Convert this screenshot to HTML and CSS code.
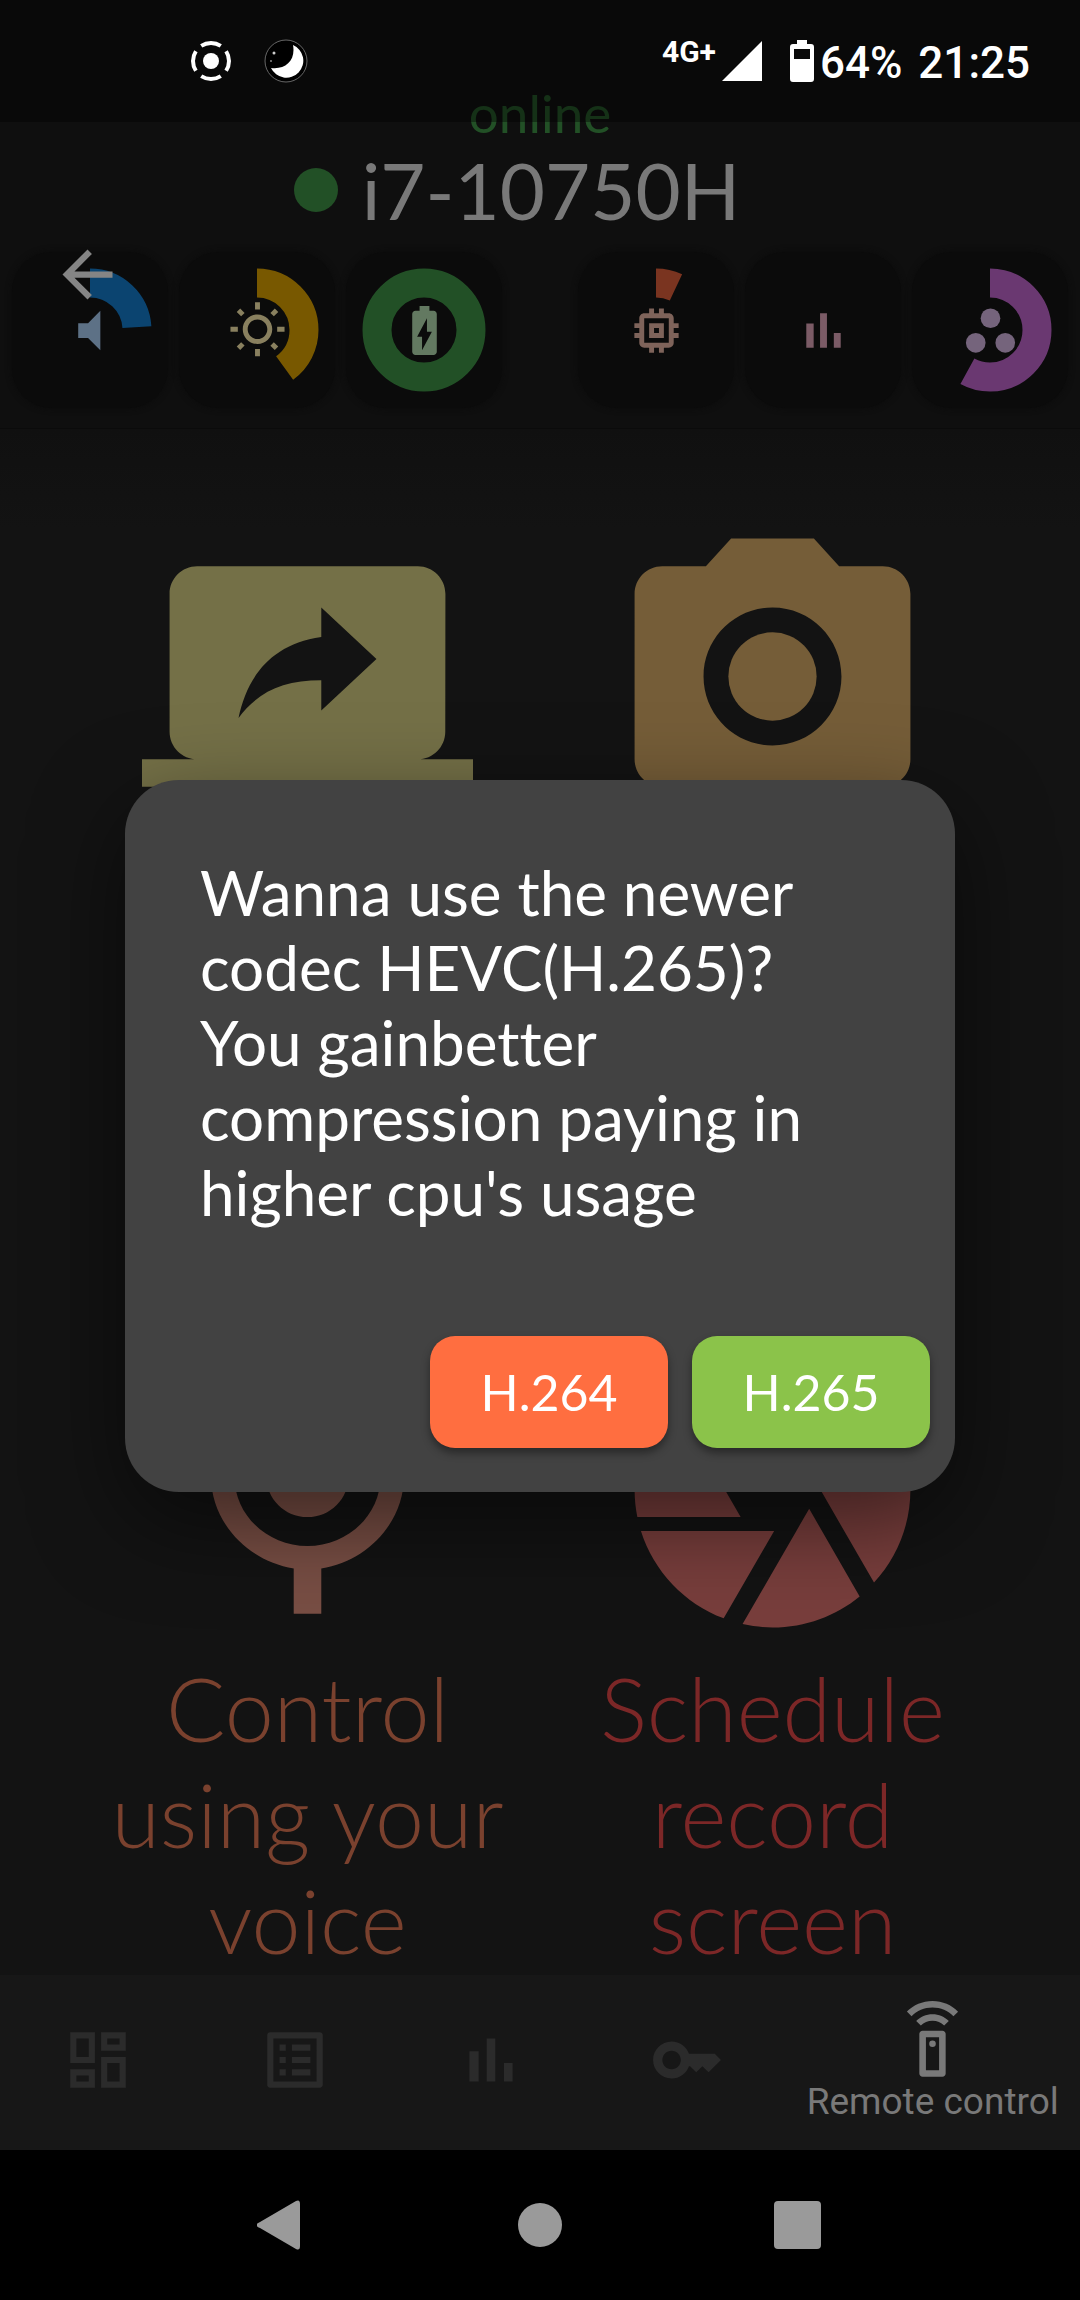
FILE: index.html
```html
<!DOCTYPE html>
<html lang="en">
<head>
<meta charset="utf-8">
<meta name="viewport" content="width=device-width, initial-scale=1">
<title>Remote control</title>
<link rel="stylesheet" href="styles.css">
</head>
<body>
<div class="app">
  <header class="header">
    <p class="state">online</p>
    <h1 class="device"><span class="device-dot"></span>i7-10750H</h1>
    <div class="gauges">
      <div class="gauge-group">
        <div class="gauge volume">
          <svg class="ring" viewBox="0 0 124 124"><circle cx="62" cy="62" r="47" pathLength="100" stroke-dasharray="24 100"/></svg>
          <svg class="glyph" viewBox="0 0 24 24"><path d="M7 9v6h4l5 5V4l-5 5H7z"/></svg>
        </div>
        <div class="gauge brightness">
          <svg class="ring" viewBox="0 0 124 124"><circle cx="62" cy="62" r="47" pathLength="100" stroke-dasharray="40 100"/></svg>
          <svg class="glyph" viewBox="0 0 24 24"><path d="M6.76 4.84l-1.8-1.79-1.41 1.41 1.79 1.79 1.42-1.41zM4 10.5H1v2h3v-2zm9-9.95h-2V3.5h2V.55zm7.45 3.91l-1.41-1.41-1.79 1.79 1.41 1.41 1.79-1.79zm-3.21 13.7l1.79 1.8 1.41-1.41-1.8-1.79-1.4 1.4zM20 10.5v2h3v-2h-3zm-8-5c-3.31 0-6 2.69-6 6s2.69 6 6 6 6-2.69 6-6-2.69-6-6-6zm0 10c-2.21 0-4-1.79-4-4s1.79-4 4-4 4 1.79 4 4-1.79 4-4 4zm-1 6.95h2V19.5h-2v2.95zm-7.45-3.91l1.41 1.41 1.79-1.8-1.41-1.41-1.79 1.8z"/></svg>
        </div>
        <div class="gauge battery">
          <svg class="ring" viewBox="0 0 124 124"><circle cx="62" cy="62" r="47"/></svg>
          <svg class="glyph" viewBox="0 0 24 24"><path d="M15.67 4H14V2h-4v2H8.33C7.6 4 7 4.6 7 5.33v15.33C7 21.4 7.6 22 8.33 22h7.33c.74 0 1.34-.6 1.34-1.33V5.33C17 4.6 16.4 4 15.67 4zM11 20v-5.5H9L13 7v5.5h2L11 20z"/></svg>
        </div>
      </div>
      <div class="gauge-group">
        <div class="gauge cpu">
          <svg class="ring" viewBox="0 0 124 124"><circle cx="62" cy="62" r="47" pathLength="100" stroke-dasharray="7 100"/></svg>
          <svg class="glyph" viewBox="0 0 24 24"><path d="M15 9H9v6h6V9zm-2 4h-2v-2h2v2zm8-2V9h-2V7c0-1.1-.9-2-2-2h-2V3h-2v2h-2V3H9v2H7c-1.1 0-2 .9-2 2v2H3v2h2v2H3v2h2v2c0 1.1.9 2 2 2h2v2h2v-2h2v2h2v-2h2c1.1 0 2-.9 2-2v-2h2v-2h-2v-2h2zm-4 6H7V7h10v10z"/></svg>
        </div>
        <div class="gauge stats">
          <svg class="glyph" viewBox="0 0 24 24"><path d="M5 9.2h3V19H5zM10.6 5h2.8v14h-2.8zm5.6 8H19v6h-2.8z"/></svg>
        </div>
        <div class="gauge memory">
          <svg class="ring" viewBox="0 0 124 124"><circle cx="62" cy="62" r="47" pathLength="100" stroke-dasharray="58 100"/></svg>
          <svg class="glyph" viewBox="0 0 24 24"><circle cx="12" cy="7" r="4"/><circle cx="6" cy="17" r="4"/><circle cx="18" cy="17" r="4"/></svg>
        </div>
      </div>
    </div>
    <button class="back" type="button" aria-label="Back">
      <svg viewBox="0 0 24 24"><path d="M20 11H7.83l5.59-5.59L12 4l-8 8 8 8 1.41-1.41L7.83 13H20v-2z"/></svg>
    </button>
  </header>

  <main class="actions">
    <a class="action share" href="#share" aria-label="Share screen">
      <svg viewBox="0 0 24 24"><path d="M20 18c1.1 0 1.99-.9 1.99-2L22 6c0-1.11-.9-2-2-2H4c-1.11 0-2 .89-2 2v10c0 1.1.89 2 2 2H0v2h24v-2h-4zm-7-3.53v-2.19c-2.78 0-4.61.85-6 2.72.56-2.67 2.11-5.33 6-5.87V7l4 3.73-4 3.74z"/></svg>
    </a>
    <a class="action photo" href="#photo" aria-label="Screenshot">
      <svg viewBox="0 0 24 24"><circle cx="12" cy="12" r="3.2"/><path d="M9 2L7.17 4H4c-1.1 0-2 .9-2 2v12c0 1.1.9 2 2 2h16c1.1 0 2-.9 2-2V6c0-1.1-.9-2-2-2h-3.17L15 2H9zm3 15c-2.76 0-5-2.24-5-5s2.24-5 5-5 5 2.24 5 5-2.24 5-5 5z"/></svg>
    </a>
    <a class="action voice" href="#voice">
      <svg viewBox="0 0 24 24"><path d="M12 14c1.66 0 2.99-1.34 2.99-3L15 5c0-1.66-1.34-3-3-3S9 3.34 9 5v6c0 1.66 1.34 3 3 3zm5.3-3c0 3-2.54 5.1-5.3 5.1S6.7 14 6.7 11H5c0 3.41 2.72 6.23 6 6.72V21h2v-3.28c3.28-.48 6-3.3 6-6.72h-1.7z"/></svg>
      <span>Control using your voice</span>
    </a>
    <a class="action schedule" href="#schedule">
      <svg viewBox="0 0 24 24"><path d="M9.4 10.5l4.77-8.26C13.47 2.09 12.75 2 12 2c-2.4 0-4.6.85-6.32 2.25l3.66 6.35.06-.1zM21.54 9c-.92-2.92-3.15-5.26-6-6.34L11.88 9h9.66zm.26 1h-7.49l.29.5 4.76 8.25C21 16.97 22 14.61 22 12c0-.69-.07-1.35-.2-2zM8.54 12l-3.9-6.75C3.01 7.03 2 9.39 2 12c0 .69.07 1.35.2 2h7.49l-1.15-2zm-6.08 3c.92 2.92 3.15 5.26 6 6.34L12.12 15H2.46zm11.27 0l-3.9 6.76c.7.15 1.42.24 2.17.24 2.4 0 4.6-.85 6.32-2.25l-3.66-6.35-.93 1.6z"/></svg>
      <span>Schedule record screen</span>
    </a>
  </main>

  <nav class="tabs">
    <a class="tab" href="#dashboard" aria-label="Dashboard"><svg viewBox="0 0 24 24"><path d="M19 5v2h-4V5h4M9 5v6H5V5h4m10 8v6h-4v-6h4M9 17v2H5v-2h4M21 3h-8v6h8V3zM11 3H3v10h8V3zm10 8h-8v10h8V11zm-10 4H3v6h8v-6z"/></svg></a>
    <a class="tab" href="#list" aria-label="List"><svg viewBox="0 0 24 24"><path d="M19 5v14H5V5h14m1.1-2H3.9c-.5 0-.9.4-.9.9v16.2c0 .4.4.9.9.9h16.2c.4 0 .9-.5.9-.9V3.9c0-.5-.5-.9-.9-.9zM11 7h6v2h-6V7zm0 4h6v2h-6v-2zm0 4h6v2h-6zM7 7h2v2H7zm0 4h2v2H7zm0 4h2v2H7z"/></svg></a>
    <a class="tab" href="#stats" aria-label="Statistics"><svg viewBox="0 0 24 24"><path d="M5 9.2h3V19H5zM10.6 5h2.8v14h-2.8zm5.6 8H19v6h-2.8z"/></svg></a>
    <a class="tab" href="#key" aria-label="Key"><svg viewBox="0 0 24 24"><path d="M21 10h-8.350C11.830 7.670 9.610 6 7 6c-3.310 0-6 2.690-6 6s2.690 6 6 6c2.610 0 4.830-1.670 5.650-4H13l2 2 2-2 2 2 4-4.040L21 10zM7 15c-1.650 0-3-1.350-3-3s1.350-3 3-3 3 1.350 3 3-1.350 3-3 3z"/></svg></a>
    <a class="tab current" href="#remote" aria-current="page"><svg viewBox="0 0 24 24"><path fill-rule="evenodd" d="M15 9H9c-.55 0-1 .45-1 1v12c0 .55.45 1 1 1h6c.55 0 1-.45 1-1V10c0-.55-.45-1-1-1zm-1 12h-4V11h4v10z"/><circle cx="12" cy="13" r="1"/><path d="M7.05 6.05l1.41 1.41C9.370 6.560 10.620 6 12 6s2.630.56 3.540 1.460l1.410-1.410C15.680 4.780 13.930 4 12 4s-3.680.78-4.950 2.050zM12 0C8.960 0 6.210 1.230 4.220 3.220l1.410 1.410C7.260 3.010 9.510 2 12 2s4.740 1.010 6.360 2.640l1.410-1.410C17.790 1.230 15.040 0 12 0z"/></svg><span>Remote control</span></a>
  </nav>

  <div class="system-nav">
    <button type="button" aria-label="System back"><svg viewBox="3 0 50 50"><path d="M6 22L42 1Q46-1 46 4V46Q46 51 42 49L6 28Q-1 25 6 22z"/></svg></button>
    <button type="button" aria-label="Home"><svg viewBox="0 0 50 50"><circle cx="25" cy="25" r="22"/></svg></button>
    <button type="button" aria-label="Recent apps"><svg viewBox="0 0 50 50"><rect x="1" y="1" width="47" height="48" rx="4"/></svg></button>
  </div>

  <div class="status">
    <div class="status-side">
      <svg class="status-icon" viewBox="0 0 44 44"><circle cx="22" cy="22" r="8" fill="#fff"/><g fill="none" stroke="#fff" stroke-width="4"><circle cx="22" cy="22" r="18" pathLength="360" stroke-dasharray="66 24" stroke-dashoffset="-57"/></g></svg>
      <svg class="status-icon" viewBox="0 0 44 44"><circle cx="22" cy="22" r="21" fill="#000" stroke="#666"/><path fill="#fff" d="M29 6A17 17 0 1 1 7 29C21 31 32 22 29 6z"/><circle cx="10" cy="14" r="1.500" fill="#ccc"/><circle cx="7" cy="22" r="1" fill="#888"/></svg>
    </div>
    <div class="status-side">
      <span class="network">4G+</span>
      <svg class="signal" viewBox="0 0 40 40"><path d="M40 0V40H0z"/></svg>
      <svg class="charge" viewBox="0 0 24 42"><path fill-rule="evenodd" d="M7 0h10v4h4q3 0 3 3v32q0 3-3 3H3q-3 0-3-3V7q0-3 3-3h4zM4 9v10h16V9z"/></svg>
      <span class="percent">64%</span>
      <time>21:25</time>
    </div>
  </div>

  <div class="overlay">
    <section class="dialog" role="dialog" aria-modal="true" aria-labelledby="question">
      <p id="question">Wanna use the newer codec HEVC(H.265)? You gainbetter compression paying in higher cpu's usage</p>
      <div class="choices">
        <button class="choice old" type="button">H.264</button>
        <button class="choice new" type="button">H.265</button>
      </div>
    </section>
  </div>
</div>
</body>
</html>
```
FILE: styles.css
```css
* {
  box-sizing: border-box;
}

body {
  margin: 0;
  background: #121212;
  font-family: Lato, "Noto Sans", sans-serif;
  font-variant-ligatures: none;
}

p, h1 {
  margin: 0;
}

a {
  color: inherit;
  text-decoration: none;
}

button {
  border: 0;
  padding: 0;
  background: none;
  color: inherit;
  font: inherit;
}

svg {
  display: block;
  fill: currentColor;
}

.app {
  position: relative;
  display: flex;
  flex-direction: column;
  min-height: 100vh;
}

/* Header */
.header {
  position: relative;
  padding: 83px 12px 20px;
  background: #0f0f0f;
  border-bottom: 1px solid #0b0b0b;
}

.state {
  color: #225026;
  font-size: 53px;
  line-height: 60px;
  text-align: center;
}

.device {
  display: flex;
  justify-content: center;
  align-items: center;
  gap: 24px;
  padding-right: 46px;
  color: #797979;
  font-size: 78px;
  font-weight: 400;
  line-height: 94px;
}

.device-dot {
  width: 44px;
  height: 44px;
  border-radius: 50%;
  background: #225026;
}

.gauges {
  display: flex;
  justify-content: space-between;
  padding-top: 15px;
}

.gauge-group {
  display: flex;
  gap: 11px;
}

.gauge {
  display: grid;
  place-items: center;
  width: 156px;
  height: 156px;
  border-radius: 40px;
  background: #0b0b0b;
  box-shadow: 0 0 6px #0b0b0b;
}

.gauge > svg {
  grid-area: 1 / 1;
}

.ring {
  width: 124px;
  height: 124px;
  fill: none;
  stroke-width: 29px;
  transform: rotate(-90deg);
}

.glyph {
  width: 59px;
  height: 59px;
}

.volume { color: #5d7186; }
.volume .ring { stroke: #0b4470; }
.brightness { color: #89805f; }
.brightness .ring { stroke: #785800; }
.battery { color: #637961; }
.battery .ring { stroke: #225026; }
.cpu { color: #7e635a; }
.cpu .ring { stroke: #7a3420; }
.stats { color: #7b5b66; }
.memory { color: #75647c; }
.memory .ring { stroke: #6a3871; }

.back {
  position: absolute;
  top: 237px;
  left: 50px;
  width: 75px;
  height: 75px;
  color: #858585;
}

.back svg {
  width: 75px;
  height: 75px;
}

/* Actions */
.actions {
  flex: 1;
  display: grid;
  grid-template-columns: 1fr 1fr;
  align-content: start;
  gap: 482px 0;
  padding: 82px 75px 0;
  background: linear-gradient(#101010, #131313 100px);
}

.action {
  display: flex;
  flex-direction: column;
  align-items: center;
  font-size: 88px;
  font-weight: 300;
  line-height: 106px;
  text-align: center;
}

.action svg {
  width: 331px;
  height: 331px;
}

.share { color: #747047; }
.photo { color: #755d38; }
.voice { color: #784e44; }
.voice span { color: #7a412e; }
.schedule { color: #783e3c; }
.schedule span { color: #7c2727; }

/* Tabs */
.tabs {
  display: flex;
  height: 175px;
  background: #171717;
  color: #2b2b2b;
}

.tab {
  flex: 2 1 0;
  display: flex;
  flex-direction: column;
  align-items: center;
  padding-top: 48px;
}

.tab svg {
  width: 74px;
  height: 74px;
}

.tab.current {
  flex-grow: 3;
  padding-top: 26px;
  color: #797979;
  font-family: Roboto, sans-serif;
  font-size: 37px;
  line-height: 44px;
  white-space: nowrap;
}

.tab.current svg {
  width: 79px;
  height: 79px;
}

/* System bars */
.system-nav {
  display: flex;
  justify-content: center;
  align-items: center;
  gap: 208px;
  height: 150px;
  background: #000;
  color: #9a9a9a;
}

.system-nav svg {
  width: 50px;
  height: 50px;
}

.status {
  position: absolute;
  inset: 0 0 auto;
  display: flex;
  justify-content: space-between;
  height: 122px;
  padding: 39px 50px 0 189px;
  background: rgba(0, 0, 0, 0.38);
  color: #fff;
  font-family: Roboto, sans-serif;
  font-size: 44px;
  font-weight: 500;
  line-height: 48px;
}

.status-side {
  display: flex;
}

.status-icon {
  width: 44px;
  height: 44px;
  margin-right: 31px;
}

.network {
  font-size: 30px;
  font-weight: 700;
  line-height: 26px;
}

.signal {
  width: 40px;
  height: 40px;
  margin: 2px 28px 0 6px;
}

.charge {
  width: 24px;
  height: 42px;
  margin: 1px 6px 0 0;
}

.percent {
  margin-right: 16px;
}

/* Codec dialog */
.overlay {
  position: absolute;
  inset: 0;
  display: grid;
  align-items: center;
  padding: 122px 125px 150px;
}

.dialog {
  padding: 75px 25px 44px 75px;
  border-radius: 54px;
  background: #424242;
  box-shadow: 0 30px 90px rgba(0, 0, 0, 0.5);
  color: #fff;
}

.dialog p {
  padding-right: 50px;
  font-size: 62px;
  line-height: 75px;
}

.choices {
  display: flex;
  justify-content: flex-end;
  gap: 24px;
  padding-top: 106px;
}

.choice {
  width: 238px;
  height: 112px;
  border-radius: 25px;
  box-shadow: 0 5px 8px rgba(0, 0, 0, 0.4);
  font-size: 50px;
}

.old { background: #ff6e40; }
.new { background: #8bc34a; }
```
